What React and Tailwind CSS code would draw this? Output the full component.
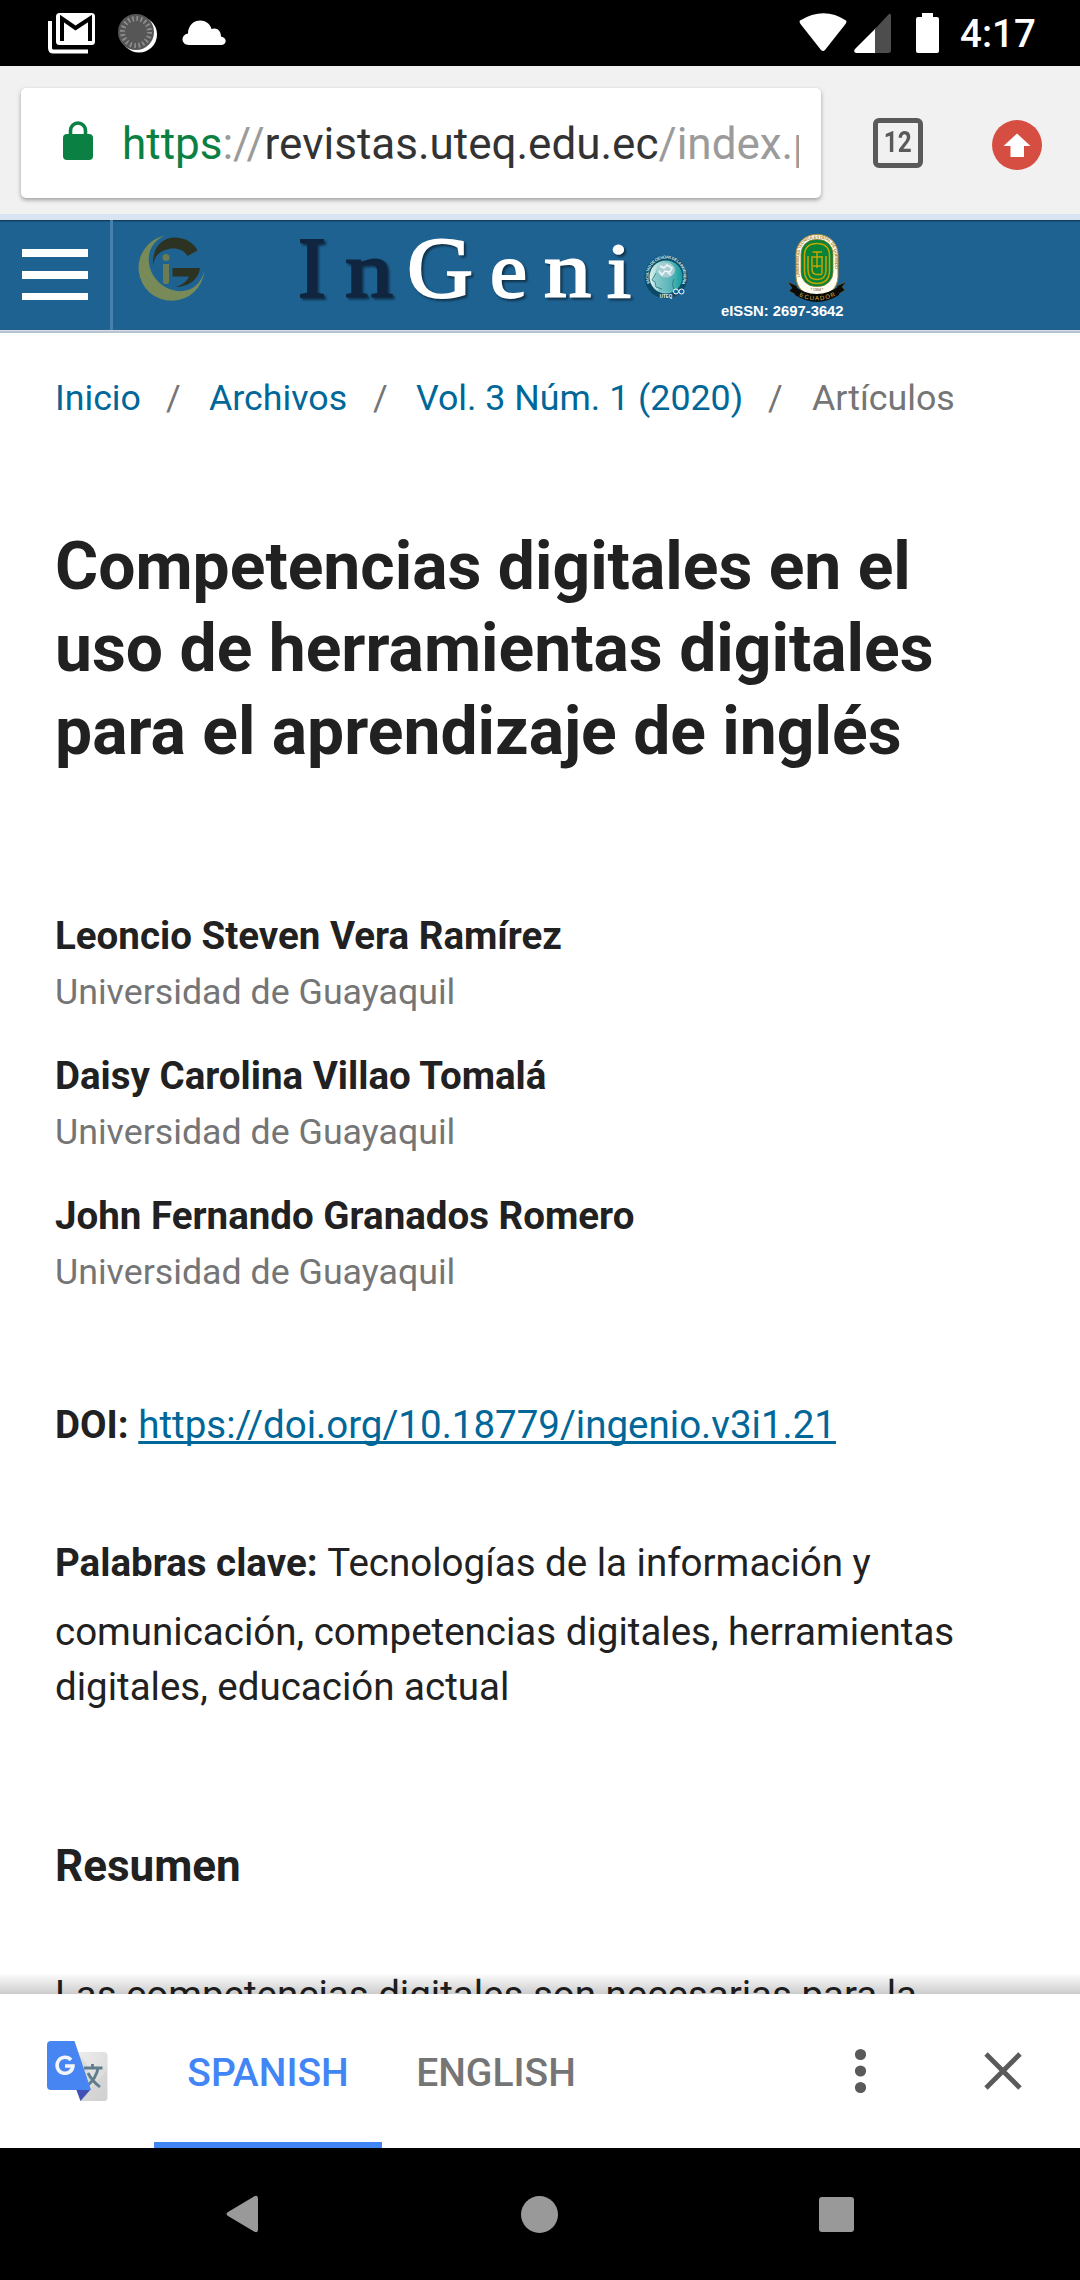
import React from "react";

const ribbon = "#0b0b08";

function StatusBar() {
  return (
    <div className="flex h-[66px] items-center bg-black">
      <svg className="ml-[48px] h-[42px] w-[47px]" viewBox="0 0 47 42">
        <path d="M2 8v27q0 3.500 3.500 3.500H40" transform="translate(0 1)" fill="none" stroke="#fff" strokeWidth="4" />
        <rect x="8" y="1" width="39" height="32" rx="3.500" fill="#fff" />
        <path d="M14 29V6.500L27.500 16 42 6.500V29" fill="none" stroke="#000" strokeWidth="4" />
      </svg>
      <svg className="ml-[23px] h-[42px] w-[40px]" viewBox="0 0 40 42">
        <circle cx="21" cy="22.500" r="18" fill="#fff" />
        <circle cx="18" cy="20" r="18" fill="#565656" />
        <circle cx="18" cy="20" r="13.500" fill="none" stroke="#8e8e8e" strokeWidth="5" strokeDasharray="1.700 2.540" />
      </svg>
      <svg className="ml-[24px] h-[26px] w-[44px]" viewBox="0 0 44 26">
        <path d="M7 25C-1 25-2 15 6 13.500C6-2 26-4 29.500 9C35 7 39 11 39 16.500C45.500 17.500 45 25 39 25Z" fill="#fff" />
      </svg>
      <div className="grow" />
      <svg className="h-[42px] w-[48px]" viewBox="0 0 48 42">
        <path d="M1 8.500Q0 10 1.500 12L22 38q2 2 4 0L46.500 12q1.500-2 .5-3.500Q25-6 1 8.500Z" fill="#fff" />
      </svg>
      <svg className="ml-[7px] h-[42px] w-[38px]" viewBox="0 0 38 42">
        <path d="M22 16V41H2q-3-1-1-4Z" fill="#fff" />
        <path d="M21 17L34 3q2-2.500 3 0V38q0 3-3 3H21Z" fill="#4d4d4d" />
      </svg>
      <svg className="ml-[24px] h-[42px] w-[23px]" viewBox="0 0 23 42">
        <path d="M6 1H17V5H21q2 0 2 2V39q0 2-2 2H2q-2 0-2-2V7q0-2 2-2H6Z" fill="#fff" />
      </svg>
      <div className="mr-[45px] ml-[21px] w-[75px] pt-[2px] text-[38.5px] leading-[66px] font-medium whitespace-nowrap text-white">4:17</div>
    </div>
  );
}

function Toolbar() {
  return (
    <div className="flex h-[148px] bg-[#f1f1f1] pt-[22px] pl-[21px]">
      <div className="flex h-[110px] w-[800px] items-center rounded-[5px] bg-white pl-[42px] shadow-[0_2px_4px_rgba(0,0,0,0.35)]">
        <svg className="-mt-[4px] h-[40px] w-[30px] shrink-0" viewBox="0 0 30 40">
          <rect x="0" y="13" width="30" height="26" rx="4" fill="#0b8043" />
          <path d="M7.500 15V9.500a7.500 7.500 0 0 1 15 0V15" fill="none" stroke="#0b8043" strokeWidth="3.600" />
        </svg>
        <div className="mt-[2px] ml-[29px] w-[677px] overflow-hidden text-[44px] leading-[60px] whitespace-nowrap text-[#333]">
          <span className="text-[#0b8043]">https</span>
          <span className="text-[#9b9b9b]">://</span>revistas.uteq.edu.ec<span className="text-[#9b9b9b]">/index.p</span>
        </div>
      </div>
      <div className="mt-[30px] ml-[52px] flex h-[50px] w-[50px] items-center justify-center rounded-[6px] border-[5.5px] border-[#5a5a5a] text-[29px] font-bold text-[#5a5a5a]">
        <span className="scale-x-[0.84]">12</span>
      </div>
      <svg className="mt-[32px] ml-[69px] h-[50px] w-[50px]" viewBox="0 0 50 50">
        <circle cx="25" cy="25" r="25" fill="#d64e41" />
        <path d="M25 13.500L38.500 26H32V37H18.500V26H11.500Z" fill="#fff" />
      </svg>
    </div>
  );
}

function MonogramLogo() {
  return (
    <svg className="mt-[15px] ml-[25px] h-[68px] w-[67px]" viewBox="0 0 67 68">
      <path d="M27 0.500A33 33 0 1 0 66.500 35C62 56 43 60 29 53C6 41 4 10 27 0.500Z" fill="#788a58" />
      <path d="M15 31C14 10 26 2 38 2.500C48 3 56 8 59.500 15.500L49.500 21C45 13 35 12 27 15C19 18 16 23 15 31Z" fill="#2c3323" />
      <path d="M34.500 33H62C61 44 51 52 37 52C45 50 49 46 51 41.500H34.500Z" fill="#2c3323" />
      <circle cx="28" cy="22.500" r="3.500" fill="#6d7c50" />
      <path d="M25 29H31V47q0 2-2 2h-2q-2 0-2-2Z" fill="#6d7c50" />
    </svg>
  );
}

function FacultySeal() {
  return (
    <svg className="h-[44px] w-[44px] overflow-visible" viewBox="0 0 44 44">
      <defs>
        <linearGradient id="head" x1="0" x2="1">
          <stop offset="0" stopColor="#d9f1ef" />
          <stop offset="1" stopColor="#129b9b" />
        </linearGradient>
        <path id="sealTop" d="M6 28A17.500 17.500 0 1 1 38 28" />
      </defs>
      <circle cx="22" cy="22" r="21.500" fill="#0b4a66" />
      <text className="fill-[#d5e8ee] font-['Liberation_Sans',sans-serif] text-[4px] font-bold">
        <textPath href="#sealTop" textLength="70">FACULTAD DE CIENCIAS DE LA INGENIERIA</textPath>
      </text>
      <circle cx="22" cy="22" r="16.500" fill="url(#head)" />
      <path d="M14 37C17 34 11 32 11 27C7 27 11 22 12 16C14 6 30 5 32 16C33 23 30 26 30 36Z" fill="#52aeb4" opacity="0.450" />
      <path d="M12 18L8 25L11 27L12 32L18 34M30 24Q27 30 31 36" fill="none" stroke="#28727c" strokeWidth="0.800" />
      <ellipse cx="22" cy="15" rx="9" ry="7.500" fill="#a9cdd2" />
      <path d="M16 11l4 2 3-3 5 3-2 4-5-1-3 4-3-4M23 17l4 3" fill="none" stroke="#edf9f9" strokeWidth="1.500" />
      <circle cx="32" cy="36.500" r="2.500" fill="#1266a0" stroke="#fff" />
      <circle cx="37.500" cy="36.500" r="2.500" fill="#1266a0" stroke="#fff" />
      <text x="22" y="43" textAnchor="middle" className="fill-white font-['Liberation_Sans',sans-serif] text-[4.5px] font-bold">UTEQ</text>
    </svg>
  );
}

function UniversityCrest() {
  return (
    <svg className="h-[68px] w-[58px] overflow-visible" viewBox="0 0 58 68">
      <defs>
        <path id="crestRing" d="M11.500 43V22Q12 4.500 29 4.500Q46 4.500 46.500 22V43" />
        <path id="ribbonLine" d="M11 62Q29 71 49 61" />
      </defs>
      <path d="M0 48L9 52 9 61 1 57 4 54ZM58 48L49 52 49 61 57 56 54 53Z" fill={ribbon} stroke="#756329" strokeWidth="0.500" />
      <rect x="8" y="0.500" width="42" height="62" rx="20" fill="#fffdf2" stroke="#a98b32" />
      <text className="fill-[#a98434] font-['Liberation_Sans',sans-serif] text-[4.2px] font-bold">
        <textPath href="#crestRing" textLength="90">UNIVERSIDAD TECNICA ESTATAL DE QUEVEDO</textPath>
      </text>
      <rect x="13" y="5.500" width="32" height="47" rx="14.500" fill="#078338" stroke="#947522" strokeWidth="0.700" />
      <g fill="none" stroke="#c6a400" strokeWidth="1.500">
        <path d="M16.500 21Q17 9.500 29 9.500Q41 9.500 41.500 21V37Q41 49.500 29 49.500Q17 49.500 16.500 37Z" />
        <path d="M20 22V36Q20 45.500 29 45.500Q38 45.500 38 36V22" />
        <path d="M24 22V35Q24 40.500 29 40.500H34M34 22V40" />
        <path d="M24.500 18H34M29 18V34M25 23H34M25 32H33" />
      </g>
      <text x="29" y="57" textAnchor="middle" className="fill-[#a98434] font-['Liberation_Sans',sans-serif] text-[3.5px] font-bold">* 1984 *</text>
      <path d="M5 51Q28 69 53 51L51 61Q29 75 7 61Z" fill={ribbon} />
      <text className="fill-[#d7b53c] font-['Liberation_Sans',sans-serif] text-[6px]">
        <textPath href="#ribbonLine" textLength="38">ECUADOR</textPath>
      </text>
    </svg>
  );
}

function SiteHeader() {
  return (
    <header className="h-[119px] border-t-[6px] border-[#d9e4f3]">
      <div className="flex h-[110px] bg-[#1e6292] shadow-[inset_0_4px_2px_-3px_rgba(0,0,0,0.5)]">
        <div className="flex h-[110px] w-[113px] flex-col gap-[14px] border-r-[3px] border-[#4780ab] pt-[29px] pl-[22px]">
          <div className="h-[8px] w-[66px] bg-white" />
          <div className="h-[8px] w-[66px] bg-white" />
          <div className="h-[7px] w-[66px] bg-white" />
        </div>
        <MonogramLogo />
        <svg className="ml-[85px] h-[100px] w-[350px]" viewBox="0 0 350 100">
          <g className="font-['Liberation_Serif',serif] text-[86px] [filter:drop-shadow(2px_2px_1px_rgba(0,0,0,0.5))]" strokeWidth="2">
            <text x="8" y="77" textLength="28" lengthAdjust="spacingAndGlyphs" className="fill-[#102540] stroke-[#102540]">I</text>
            <text x="55" y="77" textLength="48" lengthAdjust="spacingAndGlyphs" className="fill-[#102540] stroke-[#102540] text-[78px]">n</text>
            <text x="117" y="77" textLength="66" lengthAdjust="spacingAndGlyphs" className="fill-white stroke-white">G</text>
            <text x="200" y="77" textLength="37" lengthAdjust="spacingAndGlyphs" className="fill-white stroke-white text-[78px]">e</text>
            <text x="254" y="77" textLength="47" lengthAdjust="spacingAndGlyphs" className="fill-white stroke-white text-[78px]">n</text>
            <text x="317" y="77" textLength="24" lengthAdjust="spacingAndGlyphs" className="fill-white stroke-white text-[78px]">i</text>
          </g>
        </svg>
        <div className="mt-[35px] ml-[4px]"><FacultySeal /></div>
        <div className="mt-[14px] ml-[33px] flex w-[130px] flex-col">
          <div className="ml-[67px] h-[68px]"><UniversityCrest /></div>
          <div className="font-['Liberation_Sans',sans-serif] text-[14.8px] leading-[18px] font-bold whitespace-nowrap text-white">eISSN: 2697-3642</div>
        </div>
      </div>
      <div className="h-[3px] border-b-2 border-[#b5c3d5] bg-[#dddddd]" />
    </header>
  );
}

function Breadcrumbs() {
  return (
    <nav className="mt-[38px] flex h-[55px] text-[35.75px] leading-[55px] whitespace-nowrap text-[#006798]">
      <span className="w-[111px]">Inicio</span>
      <span className="w-[43px] text-[#757575]">/</span>
      <span className="w-[164px]">Archivos</span>
      <span className="w-[43px] text-[#757575]">/</span>
      <span className="w-[352px]">Vol. 3 Núm. 1 (2020)</span>
      <span className="w-[44px] text-[#757575]">/</span>
      <span className="text-[#757575]">Artículos</span>
    </nav>
  );
}

const authors = ["Leoncio Steven Vera Ramírez", "Daisy Carolina Villao Tomalá", "John Fernando Granados Romero"];

function Article() {
  return (
    <main className="h-[1661px] overflow-hidden bg-white pl-[55px] text-[38.5px] text-[#212121]">
      <Breadcrumbs />
      <h1 className="mt-[99.5px] text-[66px] leading-[82.5px] font-bold whitespace-nowrap">
        Competencias digitales en el<br />uso de herramientas digitales<br />para el aprendizaje de inglés
      </h1>
      <ul className="mt-[134.5px]">
        {authors.map((name) => (
          <li key={name} className="h-[140px] whitespace-nowrap">
            <div className="leading-[55px] font-bold">{name}</div>
            <div className="mt-[2px] text-[35.75px] leading-[55px] text-[#757575]">Universidad de Guayaquil</div>
          </li>
        ))}
      </ul>
      <p className="mt-[69px] leading-[55px] whitespace-nowrap">
        <b>DOI:</b> <a className="text-[#006798] underline decoration-[2.75px] underline-offset-[3px] [text-decoration-skip-ink:none]">https://doi.org/10.18779/ingenio.v3i1.21</a>
      </p>
      <p className="mt-[83px] leading-[55px] whitespace-nowrap"><b className="mr-[1px]">Palabras clave:</b> Tecnologías de la información y</p>
      <p className="mt-[14px] leading-[55px] whitespace-nowrap">comunicación, competencias digitales, herramientas<br />digitales, educación actual</p>
      <h2 className="mt-[125px] text-[44px] leading-[55px] font-bold">Resumen</h2>
      <p className="mt-[73px] leading-[55px] whitespace-nowrap">Las competencias digitales son necesarias para la</p>
    </main>
  );
}

function TranslateIcon() {
  return (
    <svg className="mt-[46px] ml-[47px] h-[62px] w-[61px]" viewBox="0 0 61 62">
      <defs>
        <linearGradient id="page" x1="0" y1="0" x2="1" y2="1">
          <stop offset="0" stopColor="#eeeeee" />
          <stop offset="1" stopColor="#d4d4d4" />
        </linearGradient>
      </defs>
      <path d="M28 12H57q3.500 0 3.500 3.500V57.500q0 3.500-3.500 3.500H33Z" fill="url(#page)" />
      <path d="M30 12L40 24L44 50L33 61L60 30V57q0 4-4 4H33Z" fill="#c8c8c8" opacity="0.350" />
      <path d="M37 28H55.500M45.500 24V28M51 28C50 36 45 42 39 47M41 33Q45 41 53 47" fill="none" stroke="#607d8b" strokeWidth="2.800" />
      <path d="M29 49H44L33.500 61Z" fill="#3f51b5" />
      <path d="M4 1H27.500L44 50H4q-4 0-4-4V5q0-4 4-4Z" fill="#4786f2" />
      <path d="M24 20A8 8 0 1 0 26 26H18" fill="none" stroke="#f3f5fb" strokeWidth="3.500" />
    </svg>
  );
}

function TranslateBar() {
  return (
    <div className="flex h-[154px] bg-white">
      <TranslateIcon />
      <div className="ml-[46px] w-[228px] border-b-[6px] border-[#4285f4] text-center text-[39px] leading-[159px] font-medium text-[#4285f4]">SPANISH</div>
      <div className="w-[228px] text-center text-[39px] leading-[159px] font-medium text-[#757575]">ENGLISH</div>
      <svg className="mt-[54px] ml-[244px] h-[46px] w-[12px]" viewBox="0 0 12 46">
        <g fill="#5a5a5a"><circle cx="6.500" cy="6.500" r="5.600" /><circle cx="6.500" cy="23" r="5.600" /><circle cx="6.500" cy="39.500" r="5.600" /></g>
      </svg>
      <svg className="mt-[57px] ml-[117px] h-[40px] w-[40px]" viewBox="0 0 40 40">
        <path d="M3 3L37 37M37 3L3 37" stroke="#5a5a5a" strokeWidth="4.800" />
      </svg>
    </div>
  );
}

function NavBar() {
  return (
    <div className="flex h-[132px] items-center bg-black">
      <svg className="ml-[226px] h-[38px] w-[32px]" viewBox="0 0 32 38">
        <path d="M2 17L28 1.500q4-2 4 2V34.500q0 4-4 2L2 21q-3-2 0-4Z" fill="#999" />
      </svg>
      <div className="ml-[263px] h-[37px] w-[37px] rounded-full bg-[#999]" />
      <div className="ml-[261px] h-[35px] w-[35px] rounded-[3px] bg-[#999]" />
    </div>
  );
}

export default function App() {
  return (
    <div className="h-[2280px] w-[1080px] overflow-hidden bg-white font-['Roboto',sans-serif]">
      <StatusBar />
      <Toolbar />
      <SiteHeader />
      <Article />
      <div className="relative">
        <div className="absolute bottom-full left-0 h-[21px] w-full bg-linear-to-b from-black/0 to-black/20" />
        <TranslateBar />
      </div>
      <NavBar />
    </div>
  );
}
